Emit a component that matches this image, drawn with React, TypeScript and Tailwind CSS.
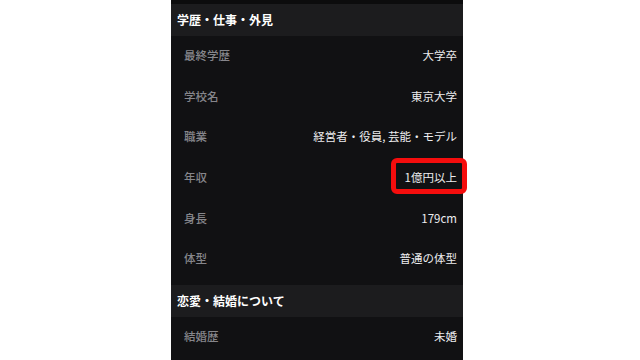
import * as React from "react"

type Row = { label: string; value: string; highlight?: boolean }

const appearance: Row[] = [
  { label: "最終学歴", value: "大学卒" },
  { label: "学校名", value: "東京大学" },
  { label: "職業", value: "経営者・役員, 芸能・モデル" },
  { label: "年収", value: "1億円以上", highlight: true },
  { label: "身長", value: "179cm" },
  { label: "体型", value: "普通の体型" },
]

const marriage: Row[] = [{ label: "結婚歴", value: "未婚" }]

const ProfileRow: React.FC<{ row: Row }> = ({ row }) => (
  <div className="flex h-[40.6px] items-center justify-between pl-[13px] pr-[6px]">
    <span className="text-[11.5px] font-medium text-[#86868b]">{row.label}</span>
    <span className="relative text-[11.5px] text-[#ececee]">
      {row.value}
      {row.highlight && (
        <span className="absolute -left-[14px] -right-[10px] top-1/2 -mt-[20px] h-[36px] rounded-[6px] border-[5px] border-[#f50d0d]" />
      )}
    </span>
  </div>
)

const SectionHeader: React.FC<{ title: string }> = ({ title }) => (
  <div className="flex h-[31.5px] items-center bg-[#1c1c1e] pl-[6px] text-[12px] font-bold text-white">
    {title}
  </div>
)

const App: React.FC = () => {
  return (
    <div
      className="flex h-[360px] w-[640px] overflow-hidden bg-white pl-[171px]"
      style={{ fontFamily: '"Noto Sans CJK JP", "Noto Sans", sans-serif' }}
    >
      <div className="flex w-[292px] flex-col bg-[#111113]">
        <div className="h-[4px] bg-[#0c0c0d]" />
        <SectionHeader title="学歴・仕事・外見" />
        <div className="pb-[6px]">
          {appearance.map((r) => (
            <ProfileRow key={r.label} row={r} />
          ))}
        </div>
        <SectionHeader title="恋愛・結婚について" />
        {marriage.map((r) => (
          <ProfileRow key={r.label} row={r} />
        ))}
      </div>
    </div>
  )
}

export default App
